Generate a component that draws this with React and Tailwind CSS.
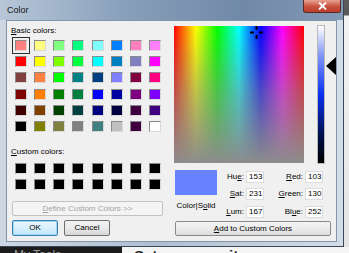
import React from 'react';

const basicColors = [
  '#ff8080', '#ffff80', '#80ff80', '#00ff80', '#80ffff', '#0080ff', '#ff80c0', '#ff80ff',
  '#ff0000', '#ffff00', '#80ff00', '#00ff40', '#00ffff', '#0080c0', '#8080c0', '#ff00ff',
  '#804040', '#ff8040', '#00ff00', '#008080', '#004080', '#8080ff', '#800040', '#ff0080',
  '#800000', '#ff8000', '#008000', '#008040', '#0000ff', '#0000a0', '#800080', '#8000ff',
  '#400000', '#804000', '#004000', '#004040', '#000080', '#000040', '#400040', '#400080',
  '#000000', '#808000', '#808040', '#808080', '#408080', '#c0c0c0', '#400040', '#ffffff',
];

const customColors = Array(16).fill('#000000');

const Swatch = ({ color, selected }) => (
  <div
    className={`w-[12px] h-[11px] border border-t-[#8a8a8a] border-l-[#8a8a8a] border-b-[#dadada] border-r-[#dadada] ${
      selected ? 'outline outline-1 outline-[#303030] outline-offset-[2px]' : ''
    }`}
    style={{ backgroundColor: color }}
  />
);

const Field = ({ label, value }) => (
  <>
    <div className="text-right pr-[2px] h-[12px] leading-[12px]">{label}</div>
    <div className="h-[12px] bg-white border border-[#dcdcdc] pl-[2px] leading-[10px]">{value}</div>
  </>
);

const App = () => {
  return (
    <div className="w-[349px] h-[253px] overflow-hidden bg-[#e9e9e9] flex flex-col font-['Liberation_Sans',Arial,sans-serif]">
      <div className="flex">
        {/* ventana del diálogo */}
        <div className="w-[344px] h-[247px] flex flex-col bg-[linear-gradient(to_right,#cdd8e4,#aebfd1_45%,#d3dde8)] border-r border-b border-[#3c4654]">
          {/* barra de título */}
          <div className="h-[20px] flex justify-between bg-[linear-gradient(to_right,#b7c7d8,#8aa1bc_35%,#7189a8_70%,#8199b5)]">
            <div className="pl-[7px] pt-[4px] text-[9px] leading-[12px] text-[#151515]">Color</div>
            <div className="mr-[2px] w-[38px] h-[13px] rounded-b-[3px] border border-t-0 border-[#5a2a22] bg-[linear-gradient(to_bottom,#e9a392,#c9503c_55%,#b8402c)] flex items-center justify-center">
              <svg width="9" height="8" viewBox="0 0 9 8">
                <path d="M1 0.5 L8 7.5 M8 0.5 L1 7.5" stroke="#ffffff" strokeWidth="1.8" />
              </svg>
            </div>
          </div>

          <div className="flex">
            <div className="w-[6px]" />
            {/* área de cliente */}
            <div className="w-[331px] h-[222px] bg-[#f0f0f0] border border-[#8594a8] flex text-[8px] leading-[10px] text-black">
              {/* columna izquierda */}
              <div className="w-[168px] flex flex-col pl-[4px]">
                <div className="mt-[5px] h-[10px]">
                  <span className="underline">B</span>asic colors:
                </div>
                <div className="mt-[4px] ml-[4px] grid grid-cols-[repeat(8,12px)] gap-x-[7.15px] gap-y-[5.2px]">
                  {basicColors.map((c, i) => (
                    <Swatch key={i} color={c} selected={i === 0} />
                  ))}
                </div>
                <div className="mt-[15px] h-[10px]">
                  <span className="underline">C</span>ustom colors:
                </div>
                <div className="mt-[6px] ml-[4px] grid grid-cols-[repeat(8,12px)] gap-x-[7.15px] gap-y-[5px]">
                  {customColors.map((c, i) => (
                    <Swatch key={i} color={c} />
                  ))}
                </div>
                <button className="mt-[11px] ml-[1px] w-[151px] h-[15px] border border-[#c2c2c2] rounded-[2px] bg-[#f4f4f4] text-[#a3a3a3] text-[8px] leading-[13px]">
                  <span className="underline">D</span>efine Custom Colors &gt;&gt;
                </button>
                <div className="mt-[4px] ml-[1px] flex gap-[6px]">
                  <button className="w-[46px] h-[16px] border border-[#3c7fb1] rounded-[2px] bg-[linear-gradient(to_bottom,#eaf6fd,#d9f0fc_50%,#bee6fd)] text-[8px] leading-[14px] shadow-[inset_0_0_0_1px_#9fd6f5]">
                    OK
                  </button>
                  <button className="w-[46px] h-[16px] border border-[#707070] rounded-[2px] bg-[linear-gradient(to_bottom,#f2f2f2,#ebebeb_50%,#d6d6d6)] text-[8px] leading-[14px]">
                    Cancel
                  </button>
                </div>
              </div>

              {/* columna derecha */}
              <div className="flex flex-col">
                <div className="flex mt-[4px]">
                  <div className="relative mt-[1px] w-[130px] h-[137px] bg-[image:linear-gradient(to_bottom,rgba(140,140,140,0),rgba(140,140,140,0.55)_50%,#8c8c8c),linear-gradient(to_right,#ff0000,#ffff00,#00ff00,#00ffff,#0000ff,#ff00ff,#ff0000)]">
                    <svg className="absolute left-[76px] top-[0px]" width="13" height="13" viewBox="0 0 13 13">
                      <path d="M6.5 0 V4 M6.5 9 V13 M0 6.5 H4 M9 6.5 H13" stroke="#000000" strokeWidth="2" />
                    </svg>
                  </div>
                  <div className="ml-[13px] w-[8px] h-[139px] border border-[#b8b8b8] bg-[linear-gradient(to_bottom,#ffffff,#7f94f6_22%,#0a30f2_50%,#00104a_80%,#000000)]" />
                  <svg className="mt-[32px] ml-[1px]" width="10" height="18" viewBox="0 0 10 18">
                    <polygon points="0,9 10,0 10,18" fill="#000000" />
                  </svg>
                </div>

                <div className="mt-[6px] flex">
                  <div className="ml-[1px] w-[42px] flex flex-col items-center">
                    <div className="w-[42px] h-[25px] bg-[#6782fc]" />
                    <div className="mt-[6px] whitespace-nowrap">
                      Color|S<span className="underline">o</span>lid
                    </div>
                  </div>
                  <div className="mt-[1px] grid grid-cols-[29px_18px_41px_18px] gap-y-[5.3px] h-fit">
                    <Field label={<>Hu<span className="underline">e</span>:</>} value="153" />
                    <Field label={<><span className="underline">R</span>ed:</>} value="103" />
                    <Field label={<><span className="underline">S</span>at:</>} value="231" />
                    <Field label={<><span className="underline">G</span>reen:</>} value="130" />
                    <Field label={<><span className="underline">L</span>um:</>} value="167" />
                    <Field label={<>Bl<span className="underline">u</span>e:</>} value="252" />
                  </div>
                </div>

                <button className="mt-[3px] ml-[1px] w-[156px] h-[15px] border border-[#8a8a8a] rounded-[2px] bg-[linear-gradient(to_bottom,#f4f4f4,#ececec_50%,#dcdcdc)] text-[8px] leading-[13px]">
                  <span className="underline">A</span>dd to Custom Colors
                </button>
              </div>
            </div>
          </div>
        </div>
        <div className="w-[5px] h-[247px] bg-[linear-gradient(to_bottom,#5a5a5a_0px,#5a5a5a_15px,#f2f2f2_16px,#e4e4e4)]" />
      </div>

      {/* página de fondo */}
      <div className="h-[6px] flex overflow-hidden">
        <div className="w-[122px] bg-[#1c1c1c] pl-[14px] text-[12px] leading-[14px] text-[#9a9a9a] pt-[1px]">My Tools</div>
        <div className="flex-1 bg-[#f5f5f5] pl-[12px] text-[15px] leading-[16px] font-bold text-[#2a2a2a] pt-[1px]">Set up your site.</div>
      </div>
    </div>
  );
};

export default App;
